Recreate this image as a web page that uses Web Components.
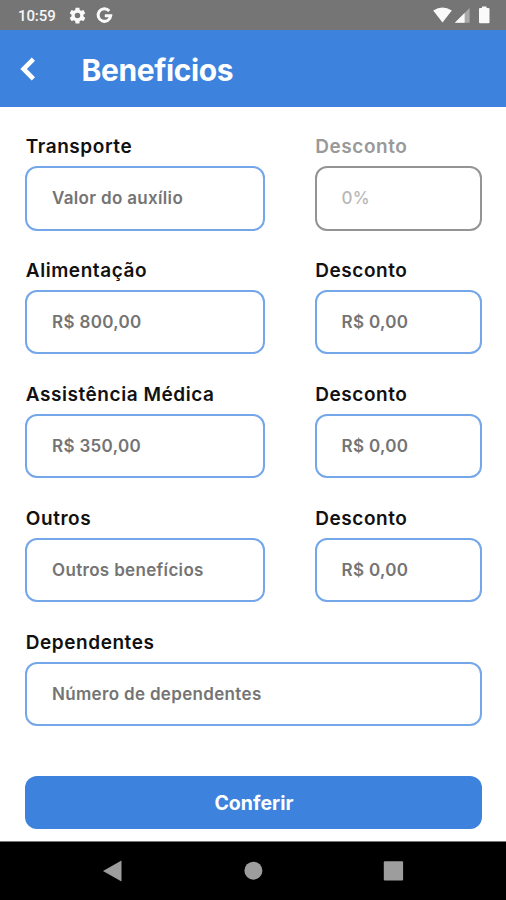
<!DOCTYPE html>
<html lang="pt-BR">
<head>
<meta charset="utf-8">
<title>Benefícios</title>
<style>
html, body { margin: 0; height: 100%; background: #fff; }
body { font-family: Inter, Roboto, sans-serif; overflow: hidden; }
</style>
</head>
<body>
<benefits-screen></benefits-screen>
<script>
const define = (name, html) => customElements.define(name, class extends HTMLElement {
  constructor() {
    super();
    const t = document.createElement('template');
    t.innerHTML = html;
    this.attachShadow({ mode: 'open' }).append(t.content.cloneNode(true));
  }
});

define('status-bar', `
<style>
:host { display: flex; align-items: center; height: 30px; box-sizing: border-box; padding: 0 16px 0 18px; background: #757575; color: #f7f7f7; font: 500 15px/30px Roboto, sans-serif; }
.time { width: 50px; padding-top: 1px; height: 29px; white-space: nowrap; letter-spacing: -.1px; }
svg { display: block; fill: #fafafa; flex: none; }
.right { margin-left: auto; }
</style>
<span class="time">10:59</span>
<svg width="48" height="30" viewBox="0 0 48 30">
  <g transform="translate(0 6.1) scale(.79)"><path d="M19.43 12.98c.04-.32.07-.64.07-.98s-.03-.66-.07-.98l2.11-1.65c.19-.15.24-.42.12-.64l-2-3.46c-.12-.22-.39-.3-.61-.22l-2.49 1c-.52-.4-1.08-.73-1.69-.98l-.38-2.65C14.46 2.18 14.25 2 14 2h-4c-.25 0-.46.18-.49.42l-.38 2.65c-.61.25-1.17.59-1.69.98l-2.49-1c-.23-.09-.49 0-.61.22l-2 3.46c-.13.22-.07.49.12.64l2.11 1.65c-.04.32-.07.65-.07.98s.03.66.07.98l-2.11 1.65c-.19.15-.24.42-.12.64l2 3.46c.12.22.39.3.61.22l2.49-1c.52.4 1.08.73 1.69.98l.38 2.65c.03.24.24.42.49.42h4c.25 0 .46-.18.49-.42l.38-2.65c.61-.25 1.17-.59 1.69-.98l2.49 1c.23.09.49 0 .61-.22l2-3.46c.12-.22.07-.49-.12-.64zM12 15.5a3.500 3.500 0 1 1 0-7 3.500 3.500 0 0 1 0 7z"/></g>
  <path d="M41.200 10.900A6.300 6.300 0 1 0 42.700 15.800H36.800" fill="none" stroke="#fafafa" stroke-width="3"/>
</svg>
<svg class="right" width="58" height="30" viewBox="0 0 58 30">
  <path d="M1.200 10.600Q10.500 4.200 19.800 10.600L10.500 22.500Z"/>
  <path d="M37.600 8V22.800H22.800Z" fill="#a9a9a9"/>
  <path d="M32.600 13V22.800H22.800Z"/>
  <path d="M48 8H50V6.500H54.500V8H56.500Q57.500 8 57.500 9V22Q57.500 23.300 56.500 23.300H48Q47 23.300 47 22V9Q47 8 48 8Z"/>
</svg>`);

define('app-header', `
<style>
:host { display: flex; align-items: center; height: 77px; box-sizing: border-box; padding-left: 20px; background: #3d82dd; color: #fff; }
svg { display: block; width: 18px; height: 26px; margin-right: 43.500px; }
h1 { margin: 0; padding-top: 2px; font-size: 30px; line-height: 38px; font-weight: 700; letter-spacing: -.4px; }
</style>
<svg viewBox="0 0 18 26"><path d="M13.400 3.200L3.600 13L13.400 22.800" fill="none" stroke="#fff" stroke-width="4.600"/></svg>
<h1><slot></slot></h1>`);

define('form-field', `
<style>
:host { display: block; height: 96px; color: #111; --line: #74a7ea; --hint: #747474; }
:host([disabled]) { color: #999; --line: #949494; --hint: #b8b8b8; }
.label { height: 24px; margin-bottom: 7px; padding-left: .8px; font-size: 19px; line-height: 24px; font-weight: 600; letter-spacing: .55px; white-space: nowrap; }
.box { display: flex; align-items: center; height: 64.500px; box-sizing: border-box; border: 2px solid var(--line); border-radius: 12px; padding-left: 25px; color: var(--hint); font-size: 17px; line-height: 24px; font-weight: 600; letter-spacing: .33px; white-space: nowrap; }
:host([disabled]) .box { font-weight: 500; }
</style>
<div class="label"><slot name="label"></slot></div>
<div class="box"><slot></slot></div>`);

define('primary-button', `
<style>
:host { display: block; }
button { display: block; width: 100%; height: 53px; border: 0; border-radius: 12px; padding: 1px 0 0 1px; background: #3d82dd; color: #fff; font: 700 19.500px/52px Inter, sans-serif; letter-spacing: .05px; }
</style>
<button><slot></slot></button>`);

define('nav-bar', `
<style>
:host { display: grid; grid-template-columns: repeat(3, 140px); justify-content: center; align-items: center; justify-items: center; height: 59px; box-sizing: border-box; border-top: 1px solid #777; background: #000; }
svg { display: block; width: 24px; height: 24px; fill: #9d9d9d; }
</style>
<svg viewBox="0 0 24 24"><path d="M2 12L20.500 1.500V22.500Z"/></svg>
<svg viewBox="0 0 24 24"><circle cx="12.400" cy="11.700" r="9"/></svg>
<svg viewBox="0 0 24 24"><rect x="2.800" y="2.300" width="19.300" height="19.300" rx="1"/></svg>`);

define('benefits-screen', `
<style>
:host { display: flex; flex-direction: column; width: 506px; height: 900px; background: #fff; }
main { flex: 1; display: flex; flex-direction: column; justify-content: space-between; padding: 28px 24px 12px 25px; }
.grid { display: grid; grid-template-columns: 240px 167.500px; column-gap: 49.500px; row-gap: 27.900px; }
.wide { grid-column: 1 / -1; }
</style>
<status-bar></status-bar>
<app-header>Benefícios</app-header>
<main>
  <div class="grid">
    <form-field><span slot="label">Transporte</span>Valor do auxílio</form-field>
    <form-field disabled><span slot="label">Desconto</span>0%</form-field>
    <form-field><span slot="label">Alimentação</span>R$ 800,00</form-field>
    <form-field><span slot="label">Desconto</span>R$ 0,00</form-field>
    <form-field><span slot="label">Assistência Médica</span>R$ 350,00</form-field>
    <form-field><span slot="label">Desconto</span>R$ 0,00</form-field>
    <form-field><span slot="label">Outros</span>Outros benefícios</form-field>
    <form-field><span slot="label">Desconto</span>R$ 0,00</form-field>
    <form-field class="wide"><span slot="label">Dependentes</span>Número de dependentes</form-field>
  </div>
  <primary-button>Conferir</primary-button>
</main>
<nav-bar></nav-bar>`);
</script>
</body>
</html>
